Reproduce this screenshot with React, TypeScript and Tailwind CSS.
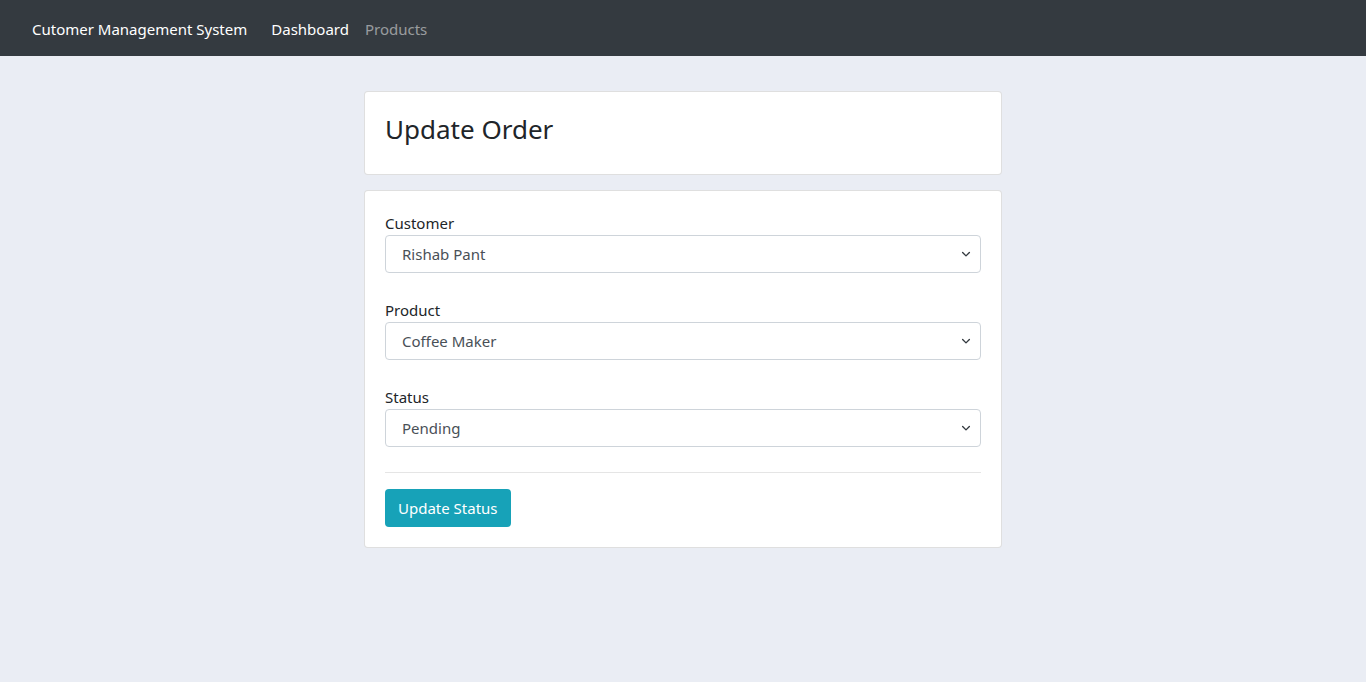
import React from "react";

const font = { fontFamily: '"Noto Sans", "Open Sans", sans-serif' };

function Chevron() {
  return (
    <svg className="absolute right-[8px] top-1/2 -translate-y-1/2" width="12" height="12" viewBox="0 0 16 16" fill="none">
      <path d="M3.5 6l4.5 4.5L12.5 6" stroke="#343a40" strokeWidth="1.8" strokeLinecap="round" strokeLinejoin="round" />
    </svg>
  );
}

function Field({ label, value, last }: { label: string; value: string; last?: boolean }) {
  return (
    <div className={last ? "" : "mb-[25px]"}>
      <div className="text-[15px] leading-[24px] text-[#212529]">{label}</div>
      <div className="relative h-[38px] rounded-[4px] border border-[#ced4da] bg-white flex items-center pl-[16px] text-[15px] text-[#495057]">
        {value}
        <Chevron />
      </div>
    </div>
  );
}

export default function App() {
  return (
    <div className="min-h-[682px] bg-[#eaedf4]" style={font}>
      <nav className="h-[56px] bg-[#343a40] flex items-center pl-[32px] pt-[2px]">
        <span className="text-white text-[15px] mr-[16px]">Cutomer Management System</span>
        <span className="text-white text-[15px] px-[8px]">Dashboard</span>
        <span className="text-[rgba(255,255,255,0.5)] text-[15px] px-[8px]">Products</span>
      </nav>
      <div className="w-[638px] mx-auto pt-[35px]">
        <div className="bg-white border border-[rgba(0,0,0,0.125)] rounded-[4px] px-[20px] pt-[20px] pb-[20px]">
          <h3 className="text-[26px] leading-[34px] mb-[8px] text-[#212529]">Update Order</h3>
        </div>
        <div className="mt-[15px] bg-white border border-[rgba(0,0,0,0.125)] rounded-[4px] p-[20px]">
          <Field label="Customer" value="Rishab Pant" />
          <Field label="Product" value="Coffee Maker" />
          <Field label="Status" value="Pending" last />
          <div className="mt-[25px] mb-[16px] border-t border-[rgba(0,0,0,0.1)]" />
          <button className="h-[38px] px-[13px] rounded-[4px] bg-[#17a2b8] text-white text-[15px]">Update Status</button>
        </div>
      </div>
    </div>
  );
}
